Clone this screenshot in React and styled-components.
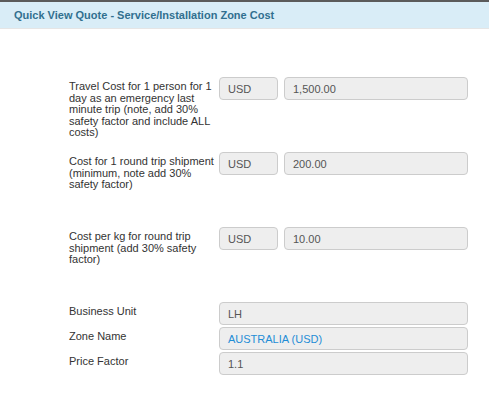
import React from 'react';
import styled, { createGlobalStyle } from 'styled-components';

const GlobalStyle = createGlobalStyle`
  html, body {
    margin: 0;
    padding: 0;
    background: #fff;
  }
  body {
    font-family: "Liberation Sans", Arial, sans-serif;
    color: #333;
  }
`

const Dialog = styled.div`
  width: 489px;
  height: 393px;
  background: #fff;
  border-top: 2px solid #5b5b5b;
  box-sizing: border-box;
  overflow: hidden;
`

const Header = styled.div`
  display: flex;
  align-items: center;
  height: 26px;
  padding-left: 14px;
  background: #d9edf7;
  border-bottom: 1px solid #e5e5e5;
  color: #31708f;
  font-size: 11px;
  font-weight: bold;
`

const Body = styled.div`
  display: flex;
  flex-direction: column;
  padding: 48px 21px 0 69px;
`

const Row = styled.div`
  display: grid;
  grid-template-columns: 150px 249px;
  align-items: start;
  height: ${props => props.$tall ? '75px' : '25px'};
`

const Label = styled.div`
  width: 146px;
  padding-top: 4px;
  font-size: 11px;
  line-height: 11.5px;
  color: #333;
`

const Controls = styled.div`
  display: flex;
  gap: 6px;
`

const Box = styled.div`
  box-sizing: border-box;
  height: 23px;
  width: ${props => props.$width ? props.$width + 'px' : 'auto'};
  flex: ${props => props.$width ? '0 0 auto' : '1'};
  display: flex;
  align-items: center;
  padding: 0 8px;
  background: #eee;
  border: 1px solid #ccc;
  border-radius: 4px;
  font-size: 11px;
  color: ${props => props.$link ? '#1f8dd6' : '#555'};
`

const costs = [
  { label: 'Travel Cost for 1 person for 1 day as an emergency last minute trip (note, add 30% safety factor and include ALL costs)', value: '1,500.00' },
  { label: 'Cost for 1 round trip shipment (minimum, note add 30% safety factor)', value: '200.00' },
  { label: 'Cost per kg for round trip shipment (add 30% safety factor)', value: '10.00' },
]

const info = [
  { label: 'Business Unit', value: 'LH' },
  { label: 'Zone Name', value: 'AUSTRALIA (USD)', link: true },
  { label: 'Price Factor', value: '1.1' },
]

const App = () => {
  return (
    <>
      <GlobalStyle />
      <Dialog>
        <Header>Quick View Quote - Service/Installation Zone Cost</Header>
        <Body>
          {costs.map(item => (
            <Row $tall key={item.label}>
              <Label>{item.label}</Label>
              <Controls>
                <Box $width={59}>USD</Box>
                <Box>{item.value}</Box>
              </Controls>
            </Row>
          ))}
          {info.map(item => (
            <Row key={item.label}>
              <Label>{item.label}</Label>
              <Controls>
                <Box $link={item.link}>{item.value}</Box>
              </Controls>
            </Row>
          ))}
        </Body>
      </Dialog>
    </>
  )
}

export default App;
